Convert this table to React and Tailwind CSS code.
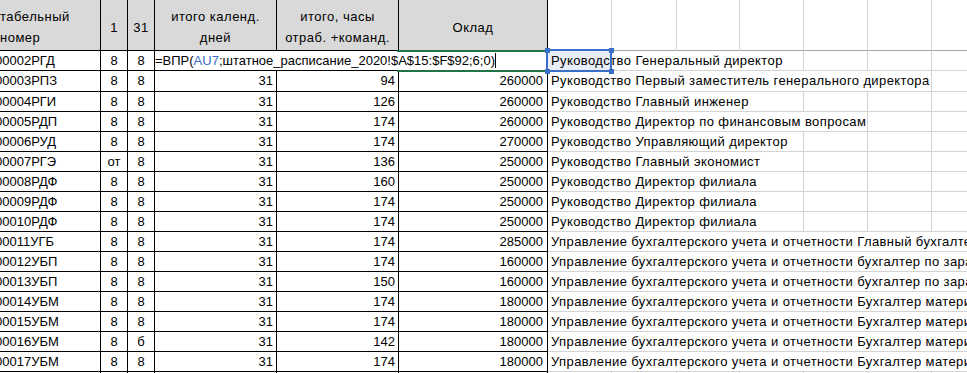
const GRID = [64, 65, 63, 64, 64, 64, 90];

const ACC = 'Управление бухгалтерского учета и отчетности';

const rows = [
  { id: '00003РПЗ', b: '8', c: '8', d: '31', e: '94', f: '260000', g: 'Руководство Первый заместитель генерального директора', span: 6, h: 'h-[21px] leading-[20px]' },
  { id: '00004РГИ', b: '8', c: '8', d: '31', e: '126', f: '260000', g: 'Руководство Главный инженер', span: 4 },
  { id: '00005РДП', b: '8', c: '8', d: '31', e: '174', f: '260000', g: 'Руководство Директор по финансовым вопросам', span: 5 },
  { id: '00006РУД', b: '8', c: '8', d: '31', e: '174', f: '270000', g: 'Руководство Управляющий директор', span: 4 },
  { id: '00007РГЭ', b: 'от', c: '8', d: '31', e: '136', f: '250000', g: 'Руководство Главный экономист', span: 4 },
  { id: '00008РДФ', b: '8', c: '8', d: '31', e: '160', f: '250000', g: 'Руководство Директор филиала', span: 4 },
  { id: '00009РДФ', b: '8', c: '8', d: '31', e: '174', f: '250000', g: 'Руководство Директор филиала', span: 4 },
  { id: '00010РДФ', b: '8', c: '8', d: '31', e: '174', f: '250000', g: 'Руководство Директор филиала', span: 4 },
  { id: '00011УГБ', b: '8', c: '8', d: '31', e: '174', f: '285000', g: `${ACC} Главный бухгалтер`, span: 7 },
  { id: '00012УБП', b: '8', c: '8', d: '31', e: '174', f: '160000', g: `${ACC} бухгалтер по заработной плате`, span: 7 },
  { id: '00013УБП', b: '8', c: '8', d: '31', e: '150', f: '160000', g: `${ACC} бухгалтер по заработной плате`, span: 7 },
  { id: '00014УБМ', b: '8', c: '8', d: '31', e: '174', f: '180000', g: `${ACC} Бухгалтер материального учета`, span: 7 },
  { id: '00015УБМ', b: '8', c: '8', d: '31', e: '174', f: '180000', g: `${ACC} Бухгалтер материального учета`, span: 7 },
  { id: '00016УБМ', b: '8', c: 'б', d: '31', e: '142', f: '180000', g: `${ACC} Бухгалтер материального учета`, span: 7 },
  { id: '00017УБМ', b: '8', c: '8', d: '31', e: '174', f: '180000', g: `${ACC} Бухгалтер материального учета`, span: 7 },
  { id: '', b: '', c: '', d: '', e: '', f: '', g: '', span: 1 },
];

const cell = 'shrink-0 border-r border-b border-black';
const grid = 'shrink-0 border-r border-b border-[#d4d4d4]';

function GridTail({ span, text, children }) {
  const spanW = GRID.slice(0, span).reduce((a, b) => a + b, 0);
  return (
    <>
      <div className={`${grid} relative whitespace-nowrap pl-[3px] tracking-[0.4px]`} style={{ width: spanW }}>
        {children}
        <span className="relative">{text}</span>
      </div>
      {GRID.slice(span).map((w, i) => (
        <div key={i} className={grid} style={{ width: w }} />
      ))}
    </>
  );
}

function Header() {
  const head = `${cell} bg-[#d9d9d9] flex items-center justify-center text-center leading-[21px] pt-[4px] tracking-[0.5px]`;
  return (
    <div className="flex h-[51px]">
      <div className={`${head} w-[109px] !justify-start !text-left pl-[8px]`}>
        табельный
        <br />
        номер
      </div>
      <div className={`${head} w-[27px]`}>1</div>
      <div className={`${head} w-[27px]`}>31</div>
      <div className={`${head} w-[122px]`}>
        итого календ.
        <br />
        дней
      </div>
      <div className={`${head} w-[122px]`}>
        итого, часы
        <br />
        отраб. +команд.
      </div>
      <div className={`${head} w-[149px]`}>Оклад</div>
      {GRID.map((w, i) => (
        <div key={i} className="shrink-0 border-r border-r-[#d4d4d4] border-b border-b-[#a3a3a3]" style={{ width: w }} />
      ))}
    </div>
  );
}

function FormulaRow() {
  return (
    <div className="flex h-[20px] leading-[19px]">
      <div className={`${cell} w-[109px] pl-[3px] whitespace-nowrap`}>00002РГД</div>
      <div className={`${cell} w-[27px] text-center`}>8</div>
      <div className={`${cell} w-[27px] text-center`}>8</div>
      <div className={`${cell} relative w-[393px] whitespace-nowrap`}>
        <span>
          =ВПР(<span className="text-[#3a6fc4]">AU7</span>;штатное_расписание_2020!$A$15:$F$92;6;0)
        </span>
        <span className="inline-block w-px h-[15px] bg-black align-[-3px]" />
        <div className="absolute left-[242px] -top-[1px] w-[151px] h-[22px] border-y-2 border-r-2 border-[#217346]" />
      </div>
      <GridTail span={4} text="Руководство Генеральный директор">
        <div className="absolute left-0 top-0 w-[63px] h-[19px] bg-[#e8edf7]" />
        <div className="absolute -left-[2px] -top-[2px] w-[66px] h-[23px] border-2 border-[#3a6fc8] z-10" />
        <div className="absolute -left-[3px] -top-[3px] w-[5px] h-[5px] bg-[#3a6fc8] z-10" />
        <div className="absolute left-[61px] -top-[3px] w-[5px] h-[5px] bg-[#3a6fc8] z-10" />
        <div className="absolute -left-[3px] top-[18px] w-[5px] h-[5px] bg-[#3a6fc8] z-10" />
        <div className="absolute left-[61px] top-[18px] w-[5px] h-[5px] bg-[#3a6fc8] z-10" />
      </GridTail>
    </div>
  );
}

export default function App() {
  return (
    <div className="w-[967px] h-[373px] overflow-hidden bg-white text-black text-[13px] font-['Liberation_Sans',Arial,sans-serif]">
      <div className="-ml-[8px] w-[1100px]">
        <Header />
        <FormulaRow />
        {rows.map((r, idx) => (
          <div key={idx} className={`flex ${r.h || 'h-[20px] leading-[19px]'}`}>
            <div className={`${cell} w-[109px] pl-[3px] whitespace-nowrap`}>{r.id}</div>
            <div className={`${cell} w-[27px] text-center`}>{r.b}</div>
            <div className={`${cell} w-[27px] text-center`}>{r.c}</div>
            <div className={`${cell} w-[122px] text-right pr-[3px]`}>{r.d}</div>
            <div className={`${cell} w-[122px] text-right pr-[3px]`}>{r.e}</div>
            <div className={`${cell} w-[149px] text-right pr-[4px]`}>{r.f}</div>
            <GridTail span={r.span} text={r.g} />
          </div>
        ))}
      </div>
    </div>
  );
}
